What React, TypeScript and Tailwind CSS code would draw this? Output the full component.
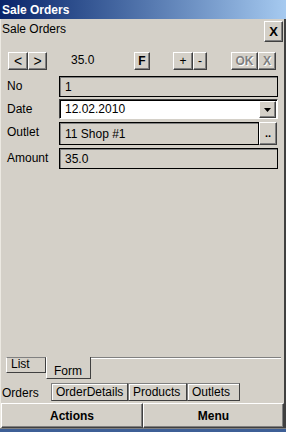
import React from 'react';

const raised =
  'border border-t-white border-l-white border-r-[#404040] border-b-[#404040] shadow-[inset_-1px_-1px_#808080] bg-[#d4d0c8]';
const field = 'border border-black shadow-[inset_1px_1px_#808080] bg-[#d4d0c8]';

function Btn({ w, h = 18, children, className = '' }: { w: number; h?: number; children: React.ReactNode; className?: string }) {
  return (
    <div
      className={`${raised} flex items-center justify-center text-[12px] leading-none ${className}`}
      style={{ width: w, height: h }}
    >
      {children}
    </div>
  );
}

function Disabled({ children }: { children: React.ReactNode }) {
  return <span className="font-bold text-[#808080] [text-shadow:1px_1px_#ffffff]">{children}</span>;
}

function Row({ label, children }: { label: string; children: React.ReactNode }) {
  return (
    <div className="flex items-start">
      <div className="w-[58px] pl-[6px] pt-[3px] text-[12px] leading-[14px] text-black">{label}</div>
      {children}
    </div>
  );
}

export default function App() {
  return (
    <div
      className="w-[286px] h-[432px] bg-[#d4d0c8] flex flex-col overflow-hidden text-black"
      style={{ fontFamily: '"Liberation Sans", Arial, sans-serif' }}
    >
      {/* title bar */}
      <div className="h-[19px] shrink-0 bg-gradient-to-r from-[#0a246a] to-[#a6caf0] flex items-center pl-[2px] text-white font-bold text-[12px]">
        Sale Orders
      </div>

      <div className="flex-1 flex flex-col border-r-2 border-r-[#404040] border-l border-l-[#ece9e2]">
        {/* header */}
        <div className="h-[25px] flex items-start justify-between pr-[1px]">
          <div className="pl-[1px] pt-[3px] text-[12px] leading-[14px]">Sale Orders</div>
          <div className="mt-[2px]">
            <Btn w={19} h={21}>
              <span className="font-bold text-[13px]">X</span>
            </Btn>
          </div>
        </div>

        {/* navigation row */}
        <div className="mt-[8px] flex items-center pl-[7px] h-[18px]">
          <Btn w={20}>
            <span className="text-[14px]">&lt;</span>
          </Btn>
          <Btn w={19}>
            <span className="text-[14px]">&gt;</span>
          </Btn>
          <div className="w-[87px] pl-[24px] text-[12px] -mt-[3px]">35.0</div>
          <Btn w={16}>
            <span className="font-bold">F</span>
          </Btn>
          <div className="w-[23px]" />
          <Btn w={20}>+</Btn>
          <Btn w={14}>-</Btn>
          <div className="w-[24px]" />
          <Btn w={27}>
            <Disabled>OK</Disabled>
          </Btn>
          <Btn w={18}>
            <Disabled>X</Disabled>
          </Btn>
        </div>

        {/* fields */}
        <div className="mt-[6px] flex flex-col">
          <Row label="No">
            <div className={`${field} w-[219px] h-[21px] pl-[5px] pt-[3px] text-[12px] leading-[14px]`}>1</div>
          </Row>
          <div className="mt-[2px]">
            <Row label="Date">
              <div className="w-[219px] h-[20px] flex bg-white border border-t-[#404040] border-l-[#404040] border-r-white border-b-white shadow-[inset_1px_1px_#000]">
                <div className="flex-1 pl-[5px] pt-[2px] text-[12px] leading-[14px]">12.02.2010</div>
                <div className={`${raised} w-[17px] h-[17px] mt-[1px] mr-[1px] flex items-center justify-center`}>
                  <svg width="7" height="4" viewBox="0 0 7 4">
                    <path d="M0 0h7L3.5 4z" fill="#000" />
                  </svg>
                </div>
              </div>
            </Row>
          </div>
          <div className="mt-[3px]">
            <Row label="Outlet">
              <div className="flex">
                <div className={`${field} w-[200px] h-[23px] pl-[5px] pt-[4px] text-[12px] leading-[14px]`}>11 Shop #1</div>
                <div className={`${raised} w-[18px] h-[23px] flex items-end justify-center pb-[5px]`}>
                  <span className="font-bold text-[11px] leading-none">..</span>
                </div>
              </div>
            </Row>
          </div>
          <div className="mt-[3px]">
            <Row label="Amount">
              <div className={`${field} w-[219px] h-[21px] pl-[5px] pt-[3px] text-[12px] leading-[14px]`}>35.0</div>
            </Row>
          </div>
        </div>

        <div className="flex-1" />

        {/* inner tabs */}
        <div className="h-[22px] flex items-start">
          <div className="w-[5px] h-[1px]" />
          <div className="w-[40px] h-[16px] border border-t-[#808080] border-l-white border-r-[#404040] border-b-[#404040] pl-[4px] text-[12px] leading-[13px]">
            List
          </div>
          <div className="w-[45px] h-[22px] border-l border-l-white border-r border-r-[#404040] border-b border-b-[#404040] pl-[7px] pt-[7px] text-[12px] leading-[14px]">
            Form
          </div>
          <div className="flex-1 mr-[3px] border-t border-t-[#808080] h-[2px] border-b border-b-white" />
        </div>

        {/* outer tabs */}
        <div className="h-[24px] flex items-start">
          <div className="w-[50px] pl-[1px] pt-[7px] text-[12px] leading-[14px]">Orders</div>
          {[
            ['OrderDetails', 77],
            ['Products', 59],
            ['Outlets', 53],
          ].map(([t, w]) => (
            <div
              key={t as string}
              className="mt-[4px] h-[18px] border border-t-[#808080] border-l-[#808080] border-r-[#404040] border-b-[#404040] shadow-[inset_1px_1px_#ffffff] pl-[4px] pt-[1px] text-[12px] leading-[14px]"
              style={{ width: w as number }}
            >
              {t}
            </div>
          ))}
        </div>

        {/* bottom buttons */}
        <div className="h-[25px] flex">
          <div className={`${raised} w-[142px] h-full flex items-center justify-center font-bold text-[12px]`}>Actions</div>
          <div className={`${raised} flex-1 h-full flex items-center justify-center font-bold text-[12px]`}>Menu</div>
        </div>
      </div>
      <div className="h-[4px] shrink-0 border-t border-t-[#808080] bg-[#3d5f96]" />
    </div>
  );
}
